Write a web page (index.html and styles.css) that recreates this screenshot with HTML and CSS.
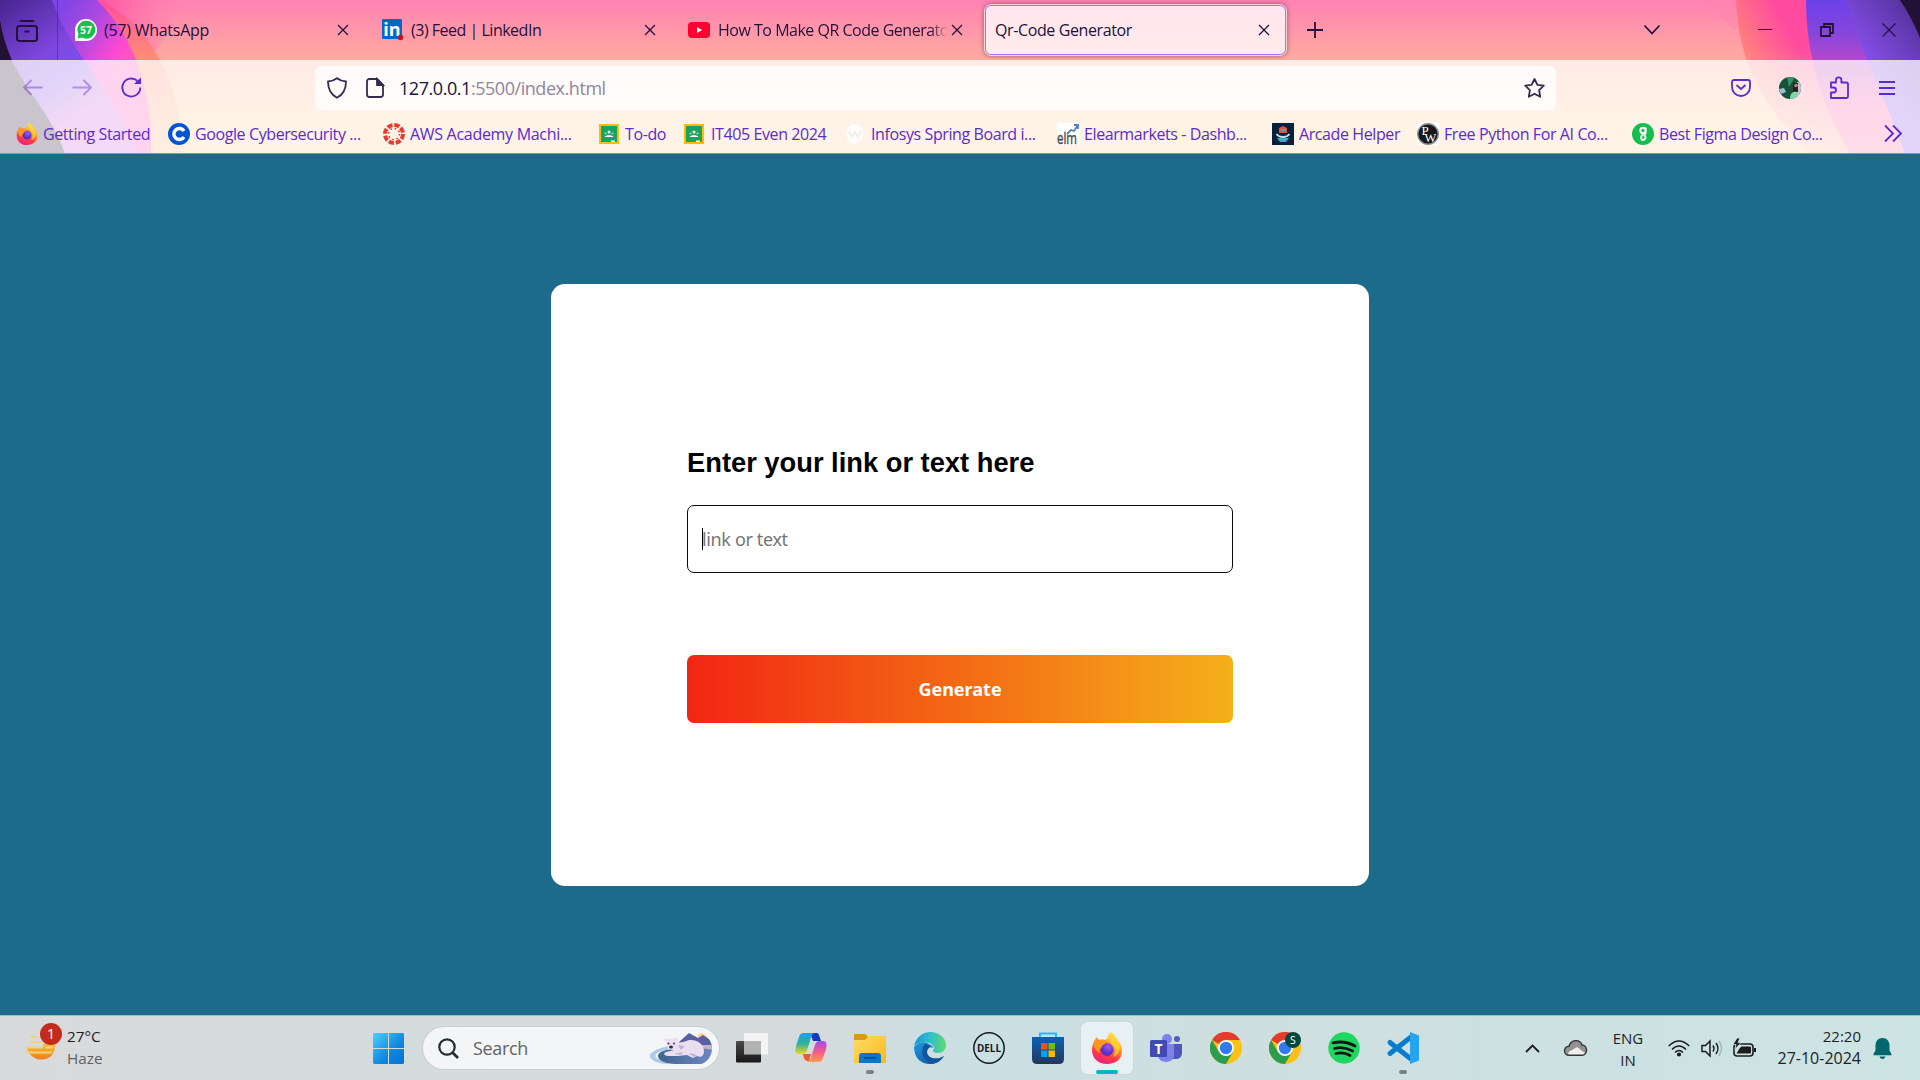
FILE: index.html
```html
<!DOCTYPE html>
<html lang="en">
<head>
<meta charset="utf-8">
<title>Qr-Code Generator</title>
<link rel="stylesheet" href="styles.css">
</head>
<body>
<svg class="defs" width="0" height="0" aria-hidden="true">
  <defs>
    <linearGradient id="ffBody" x1=".7" y1="0" x2=".3" y2="1"><stop offset="0" stop-color="#fff14f"/><stop offset=".4" stop-color="#ff9a1f"/><stop offset=".7" stop-color="#ff3b47"/><stop offset="1" stop-color="#e81f86"/></linearGradient>
    <radialGradient id="ffGlobe" cx=".6" cy=".3"><stop offset="0" stop-color="#a25cff"/><stop offset="1" stop-color="#5a2fc2"/></radialGradient>
    <symbol id="firefox" viewBox="0 0 32 32">
      <path fill="url(#ffBody)" d="M20 0c3 3 4 5 5 7 4 3 6 7 6 12 0 8-6 13-15 13S1 26 1 18c0-4 1-7 3-9l1-4 3 3c2-1 4-1 6 0l3-2c-1-2 1-5 3-6z"/>
      <circle cx="16" cy="17.500" r="6.500" fill="url(#ffGlobe)"/>
      <path fill="#ff9422" d="M3 9l3-3 3 3c2-1 4-1 6 0 1 2-1 3-3 4-1 1-1 2-2 3-2 1-3 3-1 5-4-1-7-6-6-12z"/>
      <path fill="#ffd53a" d="M20 0c4 4 9 8 9 16-1 5-4 8-7 9 3-4 3-9 0-12-3-3-5-7-2-13z" opacity=".8"/>
    </symbol>
    <symbol id="close" viewBox="0 0 12 12"><path d="M1 1l10 10M11 1L1 11" fill="none" stroke="currentColor" stroke-width="1.300"/></symbol>
    <symbol id="classroom" viewBox="0 0 20 20"><path fill="#fbbc04" d="M0 0h20v20H0z"/><path fill="#1aa260" d="M2 2h16v16H2z"/><circle cx="10" cy="8" r="1.500" fill="#fff"/><circle cx="6.500" cy="9.500" r="1" fill="#a8dbc0"/><circle cx="13.500" cy="9.500" r="1" fill="#a8dbc0"/><path fill="#fff" d="M5.500 13c1-2.500 8-2.500 9 0zM12 16.500h4V18h-4z"/></symbol>
    <symbol id="chrome" viewBox="0 0 32 32"><circle cx="16" cy="16" r="16" fill="#fbc116"/><path fill="#e33b2e" d="M16 16L2.100 8A16 16 0 0 1 29.900 8H16z"/><path fill="#2c9e4b" d="M2.100 8A16 16 0 0 0 16 32l7-12-7-4-7 4z"/><circle cx="16" cy="16" r="8" fill="#fff"/><circle cx="16" cy="16" r="6.200" fill="#2f7af0"/></symbol>
  </defs>
</svg>

<header class="browser">
  <svg class="theme" viewBox="0 0 1920 154" preserveAspectRatio="none" aria-hidden="true">
    <defs>
      <linearGradient id="sky" x2="0" y2="1"><stop offset="0" stop-color="#ff82b3"/><stop offset=".39" stop-color="#ffab9f"/><stop offset=".75" stop-color="#ffcca0"/><stop offset="1" stop-color="#ffcca0"/></linearGradient>
      <linearGradient id="glow" x1="0" x2="1"><stop offset="0" stop-color="#ff4fa0"/><stop offset="1" stop-color="#ff82b3" stop-opacity="0"/></linearGradient>
      <linearGradient id="orangeL" x2="0" y2="1"><stop offset="0" stop-color="#ff4ba0"/><stop offset=".35" stop-color="#ff8a78"/><stop offset="1" stop-color="#ffc08c"/></linearGradient>
      <linearGradient id="magenta" gradientUnits="userSpaceOnUse" x1="60" y1="10" x2="125" y2="55"><stop offset="0" stop-color="#7f45e6"/><stop offset=".45" stop-color="#b148e0"/><stop offset=".9" stop-color="#ff49d2"/><stop offset="1" stop-color="#ff52c4"/></linearGradient>
      <linearGradient id="violetL" gradientUnits="userSpaceOnUse" x1="0" y1="0" x2="80" y2="115"><stop offset="0" stop-color="#47248f"/><stop offset=".5" stop-color="#7f47e0"/><stop offset=".7" stop-color="#7b50ee"/><stop offset="1" stop-color="#d06ae0"/></linearGradient>
      <linearGradient id="orangeR" gradientUnits="userSpaceOnUse" x1="1735" y1="60" x2="1790" y2="30"><stop offset="0" stop-color="#ff8f75"/><stop offset="1" stop-color="#ff4a9f"/></linearGradient>
      <linearGradient id="fadeR" x2="0" y2="1"><stop offset=".3" stop-color="#ffab9f" stop-opacity="0"/><stop offset="1" stop-color="#ffb9a0"/></linearGradient>
      <linearGradient id="violetR" x2="0" y2="1"><stop offset="0" stop-color="#6c40ea"/><stop offset=".2" stop-color="#8445dd"/><stop offset=".39" stop-color="#b249cb"/><stop offset=".7" stop-color="#ff5bb2"/><stop offset="1" stop-color="#ff78a8"/></linearGradient>
      <linearGradient id="lilacR" gradientUnits="userSpaceOnUse" x1="1860" y1="60" x2="1915" y2="15"><stop offset="0" stop-color="#8a50ef"/><stop offset="1" stop-color="#57339f"/></linearGradient>
    </defs>
    <path fill="url(#sky)" d="M0 0h1920v154H0z"/>
    <path fill="url(#glow)" d="M96 0h94L150 60h-30z"/>
    <path fill="url(#orangeL)" d="M0 0h98C150 22 182 85 183 154H0z"/>
    <path fill="url(#magenta)" d="M0 0h97C137 40 153 95 151 154H0z"/>
    <path fill="url(#violetL)" d="M0 0h52C70 55 117 92 138 154H0z"/>
    <path fill="#221035" d="M0 20C10 83 48 102 65 154H0z"/>
    <path fill="#ff83b0" d="M1700 0h36v30z" opacity=".5"/>
    <path fill="url(#orangeR)" d="M1736 0C1739 68 1765 107 1810 154h110V0z"/>
    <path fill="url(#fadeR)" d="M1736 0C1739 68 1765 107 1810 154h60V0z"/>
    <path fill="url(#violetR)" d="M1806 0C1806 60 1824 108 1850 154h70V0z"/>
    <path fill="url(#lilacR)" d="M1846 0C1862 55 1885 96 1905 154h15V0z"/>
    <path fill="#221035" d="M1900 0q12 18 20 38V0z"/>
  </svg>

  <div class="tabstrip">
    <div class="overview">
      <svg width="22" height="22" viewBox="0 0 22 22" fill="none" stroke="#22123b" stroke-width="2"><path d="M4 1.500q0-.5 1-.5h12q1 0 1 .5"/><rect x="1" y="6" width="20" height="15" rx="2.500"/><path d="M8.500 11.500h5"/></svg>
    </div>
    <div class="tab">
      <svg class="fav" viewBox="0 0 22 22"><path fill="#fff" d="M0 22V11A11 11 0 1 1 11 22z"/><path fill="#17c04a" d="M2.500 19.500l1-4.500a9 9 0 1 1 3.500 3.500z"/><text x="11" y="14.800" text-anchor="middle" font-size="10.500" font-weight="700" fill="#fff">57</text></svg>
      <span class="title t1">(57) WhatsApp</span><svg class="x"><use href="#close"/></svg>
    </div>
    <div class="tab">
      <svg class="fav" viewBox="0 0 22 22"><rect width="20" height="20" rx="1" fill="#0a66c2"/><text x="10" y="17" text-anchor="middle" font-size="18" font-weight="700" fill="#fff">in</text><circle cx="18.500" cy="18.500" r="2.800" fill="#cb1220"/></svg>
      <span class="title">(3) Feed | LinkedIn</span><svg class="x"><use href="#close"/></svg>
    </div>
    <div class="tab">
      <svg class="fav" viewBox="0 0 22 22"><rect x="-1" y="3" width="22" height="16" rx="4" fill="#ff0033"/><path fill="#fff" d="M8 8l5 3-5 3z"/></svg>
      <span class="title fade">How To Make QR Code Generator</span><svg class="x"><use href="#close"/></svg>
    </div>
    <div class="tab active">
      <span class="title t4">Qr-Code Generator</span><svg class="x"><use href="#close"/></svg>
    </div>
    <svg class="plus" viewBox="0 0 16 16"><path d="M8 0v16M0 8h16" stroke="#22123b" stroke-width="1.800"/></svg>
    <div class="window-controls">
      <svg width="18" height="12" viewBox="0 0 18 12"><path d="M1.500 1.500L9 9.500l7.500-8" fill="none" stroke="#22123b" stroke-width="1.800"/></svg>
      <svg width="14" height="14" viewBox="0 0 14 14"><path d="M0 6.500h14" stroke="#22123b"/></svg>
      <svg width="14" height="14" viewBox="0 0 14 14"><path d="M1 4h9v9H1zM4 3.500V1h9v9h-2.500" fill="none" stroke="#22123b" stroke-width="1.800"/></svg>
      <svg width="14" height="14" viewBox="0 0 14 14"><path d="M.5 .5l13 13M13.500 .5l-13 13" stroke="#22123b" stroke-width="1.100"/></svg>
    </div>
  </div>

  <div class="toolbars">
    <div class="navbar">
      <div class="navbuttons">
        <svg class="dim" width="20" height="17" viewBox="0 0 20 17"><path d="M19.500 8.500H1M8.500 1L1 8.500 8.500 16"/></svg>
        <svg class="dim" width="20" height="17" viewBox="0 0 20 17"><path d="M.5 8.500H19M11.500 1L19 8.500 11.500 16"/></svg>
        <svg width="21" height="21" viewBox="0 0 21 21"><path d="M16.500 4A9 9 0 1 0 19.300 10.500"/><path fill="#5a2bd0" stroke="none" d="M20 .5v6.500h-7z"/></svg>
      </div>
      <div class="urlbar">
        <svg width="20" height="22" viewBox="0 0 20 22"><path d="M10 1.200c3 2.300 6 3.100 9 3.300 0 7.500-2 12.500-9 16.300C3 17 1 12 1 4.500c3-.2 6-1 9-3.300z"/></svg>
        <svg width="18" height="20" viewBox="0 0 18 20"><path d="M3.500 1H11l6 6v9.500a2.500 2.500 0 0 1-2.500 2.500h-11A2.500 2.500 0 0 1 1 16.500v-13A2.500 2.500 0 0 1 3.500 1z"/><path fill="#352a50" d="M11 1v6h6z"/></svg>
        <span class="url"><b>127.0.0.1</b>:5500/index.html</span>
        <svg class="star" width="21" height="20" viewBox="0 0 21 20"><path stroke-linejoin="round" d="M10.500 1l2.900 5.800 6.400.9-4.700 4.400 1.100 6.700-5.700-3.100-5.700 3.100 1.100-6.700L1.200 7.700l6.400-.9z"/></svg>
      </div>
      <div class="actions">
        <svg width="20" height="18" viewBox="0 0 20 18"><path d="M3 1h14a2 2 0 0 1 2 2v5c0 5-4 9-9 9s-9-4-9-9V3a2 2 0 0 1 2-2z"/><path d="M5.500 6l4.500 4 4.500-4"/></svg>
        <svg class="avatar" width="22" height="22" viewBox="0 0 22 22"><clipPath id="face"><circle cx="11" cy="11" r="11"/></clipPath><g clip-path="url(#face)" stroke="none"><path fill="#185238" d="M0 0h22v22H0z"/><path fill="#379169" d="M8 0h8l-6 10z"/><path fill="#c2c3cc" d="M18 5h4v14h-4z"/><path fill="#2e1a22" d="M14 6h5v9h-5z"/><circle cx="17" cy="8.500" r="1.800" fill="#be8277"/><path fill="#7fd9a6" d="M11 22c0-6 3-8 7-7l1 7z"/><path fill="#9cc3d2" d="M0 12l5-1 2 4-5 2z"/></g></svg>
        <svg width="20" height="23" viewBox="0 0 20 23"><path stroke-linejoin="round" d="M2 22V16.500h2.500a2.500 2.500 0 0 0 0-5H2V6.500h5V4a2.700 2.700 0 0 1 5.400 0v2.500h5q1.600 0 1.600 1.600V20.500q0 1.500-1.500 1.500z"/></svg>
        <svg width="16" height="14" viewBox="0 0 16 14"><path d="M0 1h16M0 7h16M0 13h16"/></svg>
      </div>
    </div>

    <nav class="bookmarks">
      <a class="bm"><svg><use href="#firefox"/></svg><span>Getting Started</span></a>
      <a class="bm"><svg viewBox="0 0 22 22"><circle cx="11" cy="11" r="11" fill="#0056d2"/><path d="M16 8a5.500 5.500 0 1 0 0 6" fill="none" stroke="#fff" stroke-width="3.400"/></svg><span>Google Cybersecurity ...</span></a>
      <a class="bm"><svg viewBox="0 0 22 22"><circle cx="11" cy="11" r="9" fill="none" stroke="#e63a2e" stroke-width="4" stroke-dasharray="5.300 1.770"/><circle cx="11" cy="11" r="5.500" fill="none" stroke="#e63a2e" stroke-width="1.600" stroke-dasharray="1.600 2.720"/></svg><span class="wide">AWS Academy Machi...</span></a>
      <a class="bm"><svg><use href="#classroom" x="1" y="1" width="20" height="20"/></svg><span>To-do</span></a>
      <a class="bm"><svg><use href="#classroom" x="0" y="1" width="20" height="20"/></svg><span>IT405 Even 2024</span></a>
      <a class="bm"><svg viewBox="0 0 22 22"><ellipse cx="10.500" cy="11" rx="8.500" ry="10" fill="#fffdfb"/><path d="M5 8l3 6 3-5 3 5 3-6" fill="none" stroke="#f3e9e1" stroke-width="1.500"/></svg><span>Infosys Spring Board i...</span></a>
      <a class="bm"><svg viewBox="0 0 22 22"><path fill="#fff" d="M0 0h22v22H0z"/><text x="0" y="21" font-size="16" fill="#4c5157" stroke="#4c5157" stroke-width=".5" textLength="20" lengthAdjust="spacingAndGlyphs">elm</text><path d="M10 11l4-4 3 1 4-6M17 2h4v4" fill="none" stroke="#4c7fbe" stroke-width="1.800"/></svg><span>Elearmarkets - Dashb...</span></a>
      <a class="bm"><svg viewBox="0 0 22 22"><path fill="#052038" d="M0 0h22v22H0z"/><path fill="#e1523f" d="M7 5l4-2 4 2v5H7z"/><path fill="#39a9cc" d="M9 6h5v2H9zM5 15h12l-3 4H8z"/><path d="M4.500 11q2 3 6.500 3t6.500-3" fill="none" stroke="#d4d9de" stroke-width="1.800"/></svg><span>Arcade Helper</span></a>
      <a class="bm"><svg viewBox="0 0 22 22"><path fill="#fff" d="M0 0h22v22H0z"/><circle cx="11" cy="11" r="10.300" fill="#15191c" stroke="#8b8f90" stroke-width="1.400"/><text class="serif" x="4.500" y="12" font-size="13" fill="#fff">P</text><text class="serif" x="7.500" y="18.500" font-size="12.500" fill="#fff">W</text></svg><span>Free Python For AI Co...</span></a>
      <a class="bm"><svg viewBox="0 0 22 22"><circle cx="11" cy="11" r="11" fill="#14bd4c"/><circle cx="11" cy="7.500" r="2.700" fill="none" stroke="#fff" stroke-width="1.900"/><path d="M13.500 4.500v6l-3 1.500c-2 1-1.800 5 .6 5s3.300-3 1.400-4.700" fill="none" stroke="#fff" stroke-width="1.900"/></svg><span>Best Figma Design Co...</span></a>
      <svg class="more" width="18" height="17" viewBox="0 0 18 17"><path d="M1 .5l8 8-8 8M9 .5l8 8-8 8"/></svg>
    </nav>
  </div>
</header>

<main class="page">
  <section class="card">
    <h1>Enter your link or text here</h1>
    <div class="field"><span class="caret"></span><span class="placeholder">link or text</span></div>
    <button class="generate" type="button"><span>Generate</span></button>
  </section>
</main>

<footer class="taskbar">
  <div class="weather">
    <div class="haze">
      <svg width="32" height="26" viewBox="0 0 32 26"><defs><linearGradient id="sun" x2="0" y2="1"><stop offset="0" stop-color="#fbc02b"/><stop offset="1" stop-color="#ee7d1d"/></linearGradient></defs><path fill="url(#sun)" d="M18 9h12q0 15.500-14 15.500Q5 24 2 13h16z"/><path d="M6 2h6M6 7h12M1 12.500h16M21 12.500h6M1 17.500h25" stroke="#ecd482" stroke-width="2.200" stroke-linecap="round"/></svg>
      <span class="badge">1</span>
    </div>
    <div class="lines"><span>27°C</span><span class="w2">Haze</span></div>
  </div>

  <div class="apps">
    <svg class="start" width="31" height="31" viewBox="0 0 31 31"><defs><linearGradient id="win" x2="1" y2="1"><stop offset="0" stop-color="#4fd0ff"/><stop offset=".6" stop-color="#0f86de"/><stop offset="1" stop-color="#0074d4"/></linearGradient></defs><path fill="url(#win)" d="M1 0h14v15H0V1zM16 0h14l1 1v14H16zM0 16h15v15H1l-1-1zM16 16h15v14l-1 1H16z"/></svg>
    <div class="search">
      <svg width="21" height="21" viewBox="0 0 21 21" fill="none" stroke="#2a2a2a" stroke-width="2.200"><circle cx="9" cy="9" r="7.700"/><path d="M14.500 14.500l5.500 5.500" stroke-width="2.600"/></svg>
      <span>Search</span>
      <svg class="bear" width="68" height="33" viewBox="0 0 68 33">
        <defs><linearGradient id="ice" x2="1"><stop offset="0" stop-color="#3f6591"/><stop offset="1" stop-color="#7189c2"/></linearGradient><clipPath id="pill"><path d="M0 0h50a17 17 0 0 1 0 33H0z"/></clipPath></defs>
        <g clip-path="url(#pill)">
        <circle cx="54" cy="6" r="5.500" fill="#fbcf9d"/>
        <path fill="#5761a2" d="M30 10l10-9 9 5 5-3 13 9v6H30z"/>
        <path fill="#c4b5cc" d="M50 13h17q1 9-4 15H50z"/>
        <path fill="#aacbe9" d="M19 14C6 17 1 21 1 24c0 5 10 8 18 8z"/>
        <path fill="#eef5fb" d="M17 18C7 20 5 23 7 26l11 4z"/>
        <path fill="url(#ice)" d="M9 24c0-6 15-8 29-7 14-1 24 0 29 2-3 9-8 13-16 13H26C16 32 9 28 9 24z"/>
        <path fill="#eadff0" d="M17 10l-2-3 1-1 4 1h4l3-2 2 2-1 3c3 1 7 0 12-2 9-1 15 5 15 11 0 5-3 7-7 5l-4 2-6-3-9 1H19c-4 0-5-3-2-4l8-2c-4 0-8-2-8-8z"/>
        <path fill="#c6b2d3" d="M29 13l7 1-4 4zM40 22c3-1 6 0 8 2l-3 1zM25 22l9-2-2 3z"/>
        <circle cx="19.500" cy="11.500" r=".9" fill="#352c42"/><circle cx="25" cy="11.500" r=".9" fill="#352c42"/><ellipse cx="22" cy="15" rx="2" ry="1.500" fill="#352c42"/>
        </g>
      </svg>
    </div>
    <div class="app"><svg viewBox="0 0 32 32"><defs><linearGradient id="dark" x2="0" y2="1"><stop offset="0" stop-color="#4b4b4b"/><stop offset="1" stop-color="#171717"/></linearGradient></defs><rect y="9" width="25" height="21.500" rx="1" fill="url(#dark)"/><path fill="#f4f4f4" d="M8 1h24v21.500h-7V9H8z"/><path fill="#b2b3b4" d="M8 9h17v13.500H8z"/></svg></div>
    <div class="app"><svg viewBox="0 0 32 32"><defs><linearGradient id="cpA" x2="0" y2="1"><stop offset="0" stop-color="#1b9ff0"/><stop offset=".5" stop-color="#2cb29c"/><stop offset="1" stop-color="#f2d414"/></linearGradient><linearGradient id="cpB" x2="0" y2="1"><stop offset="0" stop-color="#a64bf0"/><stop offset=".5" stop-color="#f5588c"/><stop offset="1" stop-color="#ff9a4c"/></linearGradient></defs><path fill="#143ac4" d="M15 1h6c3 0 3 2 4 5l1 3h-8z"/><path fill="#f0582e" d="M8 22h8l-2 7H13c-3 0-4-2-5-7z"/><path fill="url(#cpA)" d="M9 1h11c-3 0-4 4-5 8l-3 9c-1 3-2 4-5 4H4c-4 0-4-4-3-8l3-9c1-3 2-4 5-4z"/><path fill="url(#cpB)" d="M23 30H12c3 0 4-4 5-8l3-9c1-3 2-4 5-4h3c4 0 4 4 3 8l-3 9c-1 3-2 4-5 4z"/></svg></div>
    <div class="app run"><svg viewBox="0 0 32 32"><defs><linearGradient id="fold" x2="1" y2="1"><stop offset="0" stop-color="#ffdc6b"/><stop offset="1" stop-color="#f8b917"/></linearGradient></defs><path fill="url(#fold)" d="M0 7h10l4-3h18v27H0z"/><path fill="#dc9a08" d="M0 3q0-1 1-1h10l3 2.500L11 8H0z"/><path fill="#0c76cb" d="M5 31v-7q0-3 3-3h16q3 0 3 3v7z"/><path fill="#075194" d="M10 25h12v2H10z"/></svg></div>
    <div class="app"><svg viewBox="0 0 32 32"><defs><linearGradient id="edgeA"><stop offset="0" stop-color="#1c94d2"/><stop offset=".5" stop-color="#30bed1"/><stop offset="1" stop-color="#61d969"/></linearGradient><linearGradient id="edgeB" x2="1" y2="1"><stop offset="0" stop-color="#2099e0"/><stop offset="1" stop-color="#0e4b93"/></linearGradient></defs><path fill="url(#edgeA)" d="M0 14C2 5 9 0 16 0c9 0 16 6 16 13 0 5-4 8-8 8-3 0-6-1-5-3 2-1 1-6-4-7C9 9 2 11 0 14z"/><path fill="url(#edgeB)" d="M0 15c3-5 10-6 15-3 3 1 4 3 4 4-2-2-6 0-6 4 0 6 9 9 17 4-3 5-8 8-14 8C7 32 0 26 0 15z"/><path fill="#10569f" d="M11 12c-4 4-4 14 3 18l2 2c6 0 11-3 14-8-8 5-17 2-17-4 0-2 1-4 3-5-1-2-3-3-5-3z"/></svg></div>
    <div class="app"><svg viewBox="0 0 32 32"><circle cx="16" cy="16" r="15.200" fill="none" stroke="#15191b" stroke-width="1.500"/><text x="4" y="20" font-size="11" font-weight="700" fill="#15191b" textLength="24" lengthAdjust="spacingAndGlyphs">DELL</text></svg></div>
    <div class="app"><svg viewBox="0 0 32 32"><defs><linearGradient id="store" x2="0" y2="1"><stop offset="0" stop-color="#0a62b4"/><stop offset="1" stop-color="#24365e"/></linearGradient></defs><path d="M8 6V1.500h16V6" fill="none" stroke="#2bb8f3" stroke-width="2"/><path fill="url(#store)" d="M0 5h32v22q0 5-5 5H5q-5 0-5-5z"/><path fill="#f25022" d="M9 11h6.500v6.500H9z"/><path fill="#7fba00" d="M16.500 11H23v6.500h-6.500z"/><path fill="#00a4ef" d="M9 18.500h6.500V25H9z"/><path fill="#ffb900" d="M16.500 18.500H23V25h-6.500z"/></svg></div>
    <div class="app current"><svg><use href="#firefox"/></svg></div>
    <div class="app"><svg viewBox="0 0 32 32"><circle cx="27" cy="7" r="3" fill="#5459c0"/><path fill="#5156be" d="M21 12h11v9q0 5-5 6h-6z"/><circle cx="17" cy="7" r="5" fill="#7b83eb"/><path fill="#7b83eb" d="M8 12h16v11c0 9-15 9-16 1z"/><rect y="8" width="17" height="17" rx="1.500" fill="#4149b4"/><text x="8.500" y="21.500" text-anchor="middle" font-size="14" font-weight="700" fill="#fff">T</text></svg></div>
    <div class="app"><svg><use href="#chrome"/></svg></div>
    <div class="app"><svg viewBox="0 0 32 32"><use href="#chrome"/><circle cx="24" cy="8" r="8" fill="#05493e"/><text x="24" y="12" text-anchor="middle" font-size="10.500" fill="#fff">S</text></svg></div>
    <div class="app"><svg viewBox="0 0 32 32"><circle cx="16" cy="16" r="15.700" fill="#1ed760"/><path d="M5 11q11-3 22 3M6.500 16.500q9-2.500 18 2.500M8 21.500q8-1.700 14 2" fill="none" stroke="#101512" stroke-width="2.800" stroke-linecap="round"/></svg></div>
    <div class="app run"><svg viewBox="0 0 32 32"><path d="M3 10.500L24 27M3 21.500L24 5" stroke="#0a7dc9" stroke-width="5" stroke-linecap="round"/><path fill="#24a4f0" d="M23 0l9 3.500v25L23 32z"/></svg></div>
  </div>

  <div class="tray">
    <svg class="up" width="15" height="9" viewBox="0 0 15 9"><path d="M1 8l6.500-6.500L14 8" fill="none" stroke="#1c1c1c" stroke-width="1.800"/></svg>
    <svg class="cloud" width="24" height="18" viewBox="0 0 24 18"><path fill="#929292" d="M5 16a4.500 4.500 0 0 1 0-9C7 0 16 0 18 6c6 0 6 10 0 10z"/><path fill="#f0eeee" d="M4 16q0-4 4-5l5-3 8 6-3 2z"/><path fill="none" stroke="#333" stroke-width="1.400" d="M5 16.300a4.500 4.500 0 0 1 0-9C7 0 16 0 18 6c6 0 6 10.300 0 10.300z"/></svg>
    <div class="lang"><span>ENG</span><span>IN</span></div>
    <svg class="wifi" width="22" height="17" viewBox="0 0 22 17" fill="none" stroke="#1c1c1c" stroke-width="1.500"><path d="M.7 6q10.300-10 20.600 0M4 9.500q7-7 14 0M7 12.500q4-4 8 0"/><circle cx="11" cy="14.500" r="1.300" fill="#1c1c1c"/></svg>
    <svg class="vol" width="22" height="19" viewBox="0 0 22 19" fill="none" stroke="#1c1c1c" stroke-width="1.500"><path d="M1 6.500h3.500L9 2v15l-4.500-4.500H1z"/><path d="M12 6.500q2 3 0 6M15 4q4 5.500 0 11"/><path d="M18 2q5 7.500 0 15" stroke="#a5b7b7"/></svg>
    <svg class="bat" width="24" height="18" viewBox="0 0 24 18"><rect x="1" y="5" width="19" height="12" rx="3" fill="none" stroke="#1c1c1c" stroke-width="1.600"/><path fill="#1c1c1c" d="M3.500 14.500l3-5 2-2H17q1 0 1 1v5q0 1-1 1zM21 9h2v4h-2z"/><path fill="#1c1c1c" stroke="#cce1e2" stroke-width=".8" d="M4-1L0 5.500h3L2 10.500l6-7H5L7-1z"/></svg>
    <div class="clock"><span>22:20</span><span class="date">27-10-2024</span></div>
    <svg class="bell" width="19" height="21" viewBox="0 0 19 21"><path fill="#02666d" d="M9.500 0C5 0 2.500 3.500 2.500 7.500v5L.5 16v1.300h18V16l-2-3.500v-5C16.500 3.500 14 0 9.500 0zM6.500 18.500h6q-1 2.500-3 2.500t-3-2.500z"/></svg>
  </div>
</footer>
</body>
</html>
```
FILE: styles.css
```css
* { box-sizing: border-box; }
body {
  margin: 0;
  width: 1920px;
  height: 1080px;
  overflow: hidden;
  display: flex;
  flex-direction: column;
  background: #1c6b8a;
  font-family: "Open Sans", "Noto Sans", sans-serif;
  font-size: 15px;
}
svg { display: block; flex: none; overflow: visible; }
.defs { position: absolute; }
span { white-space: nowrap; }

/* browser window */
.browser { position: relative; height: 154px; flex: none; }
.theme { position: absolute; inset: 0; width: 100%; height: 100%; overflow: hidden; }
.tabstrip { position: relative; height: 60px; display: flex; align-items: center; color: #22123b; }
.overview { width: 58px; height: 60px; padding: 20px 0 0 16px; border-right: 1px solid rgba(50, 20, 110, .4); }
.tab { width: 307px; height: 50px; display: flex; align-items: center; padding: 0 16px 0 17px; }
.fav { width: 22px; height: 22px; margin-right: 7px; }
.title { flex: 1; min-width: 0; overflow: hidden; line-height: 24px; font-size: 16px; letter-spacing: -.49px; }
.t1 { letter-spacing: -.25px; }
.t4 { letter-spacing: -.38px; }
.x { width: 12px; height: 12px; }
.fade { -webkit-mask-image: linear-gradient(90deg, #000 212px, transparent 230px); mask-image: linear-gradient(90deg, #000 212px, transparent 230px); }
.tab.active {
  width: 301px;
  margin-left: 6px;
  padding: 0 15px 0 9px;
  background: rgba(255, 255, 255, .78);
  border: 1.500px solid #a873f5;
  border-radius: 6px;
  outline: 1px solid rgba(255, 235, 245, .8);
  box-shadow: 0 0 5px 1px rgba(90, 50, 60, .6);
}
.plus { width: 16px; height: 16px; margin-left: 21px; }
.window-controls { margin-left: auto; padding-right: 24px; display: flex; align-items: center; gap: 48px; }
.window-controls svg:first-child { margin-right: 49px; }

.toolbars { position: relative; height: 94px; background: rgba(255, 254, 252, .76); border-bottom: 1px solid #a98b80; }
.toolbars svg { fill: none; stroke: #5a2bd0; stroke-width: 1.800; }
.navbar { height: 55px; display: flex; align-items: center; }
.navbuttons { width: 315px; padding-left: 23px; display: flex; align-items: center; gap: 29px; }
.navbuttons .dim { opacity: .42; }
.urlbar { width: 1241px; height: 44px; padding: 0 11px 0 12px; display: flex; align-items: center; background: rgba(255, 255, 255, .78); border-radius: 6px; }
.toolbars .urlbar svg { stroke: #352a50; }
.urlbar svg:nth-child(2) { margin-left: 19px; }
.url { margin-left: 15px; font-size: 18px; color: #8f869c; letter-spacing: -.45px; }
.url b { font-weight: 400; color: #22123b; }
.star { margin-left: auto; }
.actions { margin-left: auto; padding-right: 25px; display: flex; align-items: center; gap: 29px; }
.actions .avatar { margin: 0 1px 0 -1px; }
.actions svg:nth-child(3) { margin: 0 1px 0 -2px; }
.bookmarks { height: 38px; padding: 0 0 1px 16px; display: grid; grid-template-columns: 152px 215px 215px 86px 160px 213px 215px 145px 215px 252px 18px; align-items: center; color: #5a2bd0; }
.bm { display: flex; align-items: center; gap: 5px; font-size: 16px; letter-spacing: -.4px; }
.bm svg { width: 22px; height: 22px; letter-spacing: 0; }
.toolbars .bm svg { stroke: none; }
.bm .wide { letter-spacing: -.3px; }
.serif { font-family: "Liberation Serif", serif; }

/* page */
.page { height: 861px; padding-top: 130px; flex: none; }
.card { width: 818px; height: 602px; margin: 0 auto; padding: 163px 136px 0; background: #fff; border-radius: 14px; font-family: "Liberation Sans", Arial, sans-serif; }
h1 { margin: 0 0 26px; font-size: 27.300px; line-height: 32px; font-weight: 700; color: #000; white-space: nowrap; }
.field { height: 68px; padding-left: 14px; display: flex; align-items: center; border: 1px solid #12050f; border-radius: 7px; font-family: "Noto Sans", sans-serif; font-size: 18px; color: #757575; }
.placeholder { letter-spacing: -.36px; }
.caret { width: 1px; height: 22px; margin-right: -1px; background: #000; }
.generate { display: block; width: 100%; height: 68px; margin-top: 82px; padding: 0; border: 0; border-radius: 7px; background: linear-gradient(90deg, #f22613, #f36a15 50%, #f5b01a); color: #fff; font: 700 18px "Noto Sans", sans-serif; }

/* taskbar */
.taskbar { position: relative; height: 65px; flex: none; display: flex; align-items: center; border-top: 1px solid #a9b4b8; background: linear-gradient(90deg, #d9dadc 0, #d4dcdd 24%, #d4dbdd 43%, #cae0e4 51%, #cfdfdf 65%, #cce1e2 85%, #cde4e4 100%); color: #1f2224; }
.weather { width: 373px; padding-left: 25px; display: flex; align-items: center; }
.haze { position: relative; width: 32px; height: 26px; }
.badge { position: absolute; left: 15px; top: -12px; width: 22px; height: 22px; border-radius: 50%; background: #c42b1c; color: #fff; text-align: center; line-height: 21px; }
.lines { display: flex; flex-direction: column; margin: -2px 0 0 10px; line-height: 22px; font-size: 15.300px; }
.w2 { color: #5d6163; }
.apps { display: flex; align-items: center; }
.search { width: 296px; height: 42px; margin: 0 7px 0 19px; padding: 0 2px 0 15px; display: flex; align-items: center; border-radius: 21px; background: #f3f5f6; box-shadow: 0 0 0 1px #c9cfd0; }
.search span { margin-left: 14px; font-size: 18px; letter-spacing: -.35px; color: #626567; }
.bear { margin-left: auto; }
.app { position: relative; width: 52px; height: 52px; margin-right: 7.200px; display: flex; align-items: center; justify-content: center; border-radius: 6px; }
.app svg { width: 32px; height: 32px; }
.app.current { background: #e7f0f2; box-shadow: 0 0 1px #aab; }
.app.run::after, .app.current::after { content: ""; position: absolute; left: 22px; bottom: 0; width: 8px; height: 4px; border-radius: 2px; background: #7b8385; }
.app.current::after { left: 15px; width: 22px; background: #00b7c3; }
.tray { margin-left: auto; padding-right: 28px; display: flex; align-items: center; }
.cloud { margin-left: 24px; }
.lang { width: 32px; margin: 2px 24px 0; display: flex; flex-direction: column; align-items: center; line-height: 22px; }
.vol { margin-left: 11px; }
.bat { margin-left: 10px; }
.clock { width: 104px; margin-top: -2px; display: flex; flex-direction: column; align-items: flex-end; line-height: 22px; }
.date { font-size: 16px; }
.bell { margin-left: 12px; }
```
